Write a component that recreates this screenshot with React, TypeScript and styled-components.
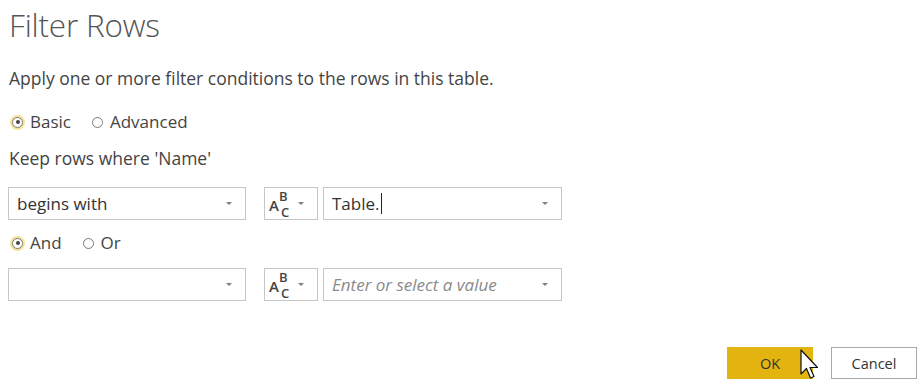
import { createGlobalStyle } from "styled-components"
import styled from "styled-components"

const GlobalStyle = createGlobalStyle`
    body {
        margin: 0;
        background: #ffffff;
        font-family: "Open Sans", "Noto Sans", sans-serif;
        color: #444444;
    }
`

const Dialog = styled.div`
    width: 922px;
    height: 386px;
    box-sizing: border-box;
    padding: 0 5px 0 8px;
    display: flex;
    flex-direction: column;
    position: relative;
`

const Title = styled.h1`
    margin: 3px 0 0 1px;
    font-weight: 300;
    font-size: 31.5px;
    line-height: 44px;
    color: #555555;
    letter-spacing: -0.2px;
`

const Description = styled.p`
    margin: 20px 0 0 1px;
    font-size: 17.5px;
    line-height: 22px;
`

const RadioGroup = styled.div<{ $top: number }>`
    display: flex;
    align-items: center;
    gap: 21px;
    height: 22px;
    margin-left: 4px;
    margin-top: ${(p) => p.$top}px;
`

const RadioOption = styled.label`
    display: flex;
    align-items: center;
    gap: 7px;
    font-size: 17px;
    line-height: 22px;
`

const RadioCircle = styled.span<{ $checked?: boolean }>`
    width: 9px;
    height: 9px;
    border-radius: 50%;
    border: 1px solid #7a7a7a;
    display: flex;
    align-items: center;
    justify-content: center;
    background: #ffffff;
    box-shadow: ${(p) => (p.$checked ? "0 0 0 2px #f6e39a" : "none")};
    &::after {
        content: "";
        width: 4px;
        height: 4px;
        border-radius: 50%;
        background: ${(p) => (p.$checked ? "#444444" : "transparent")};
    }
`

const Label = styled.div`
    margin: 14px 0 0 1px;
    font-size: 17.5px;
    line-height: 22px;
`

const FilterRow = styled.div<{ $top: number }>`
    display: flex;
    align-items: center;
    margin-top: ${(p) => p.$top}px;
    height: 33px;
`

const Select = styled.div<{ $width: number; $gap?: number }>`
    box-sizing: border-box;
    width: ${(p) => p.$width}px;
    height: 33px;
    margin-left: ${(p) => p.$gap ?? 0}px;
    border: 1px solid #c6c6c6;
    display: flex;
    align-items: center;
    padding: 0 13px 0 8px;
    font-size: 17px;
`

const SelectText = styled.span<{ $placeholder?: boolean }>`
    flex: 1;
    color: ${(p) => (p.$placeholder ? "#8a8a8a" : "#333333")};
    font-style: ${(p) => (p.$placeholder ? "italic" : "normal")};
    display: flex;
    align-items: center;
`

const Caret = styled.span`
    display: inline-block;
    width: 1px;
    height: 21px;
    background: #222222;
    margin-left: 1px;
`

const Arrow = styled.span`
    width: 0;
    height: 0;
    border-left: 3px solid transparent;
    border-right: 3px solid transparent;
    border-top: 3px solid #808080;
`

// "ABC" text-type glyph: A with a raised B and a lowered C
const TypeIcon = styled.span`
    position: relative;
    width: 26px;
    height: 24px;
    color: #444444;
    font-weight: 600;
    margin-right: 8px;
    margin-left: -4px;
    span, sup, sub {
        position: absolute;
        font-size: 13px;
        line-height: 13px;
    }
    span { left: 0; bottom: 3px; font-size: 15px; line-height: 15px; }
    sup { left: 10px; top: -2px; }
    sub { left: 12px; bottom: -3px; }
`

const Footer = styled.div`
    margin-top: auto;
    margin-bottom: 7px;
    display: flex;
    justify-content: flex-end;
    gap: 18px;
`

const DialogButton = styled.button<{ $primary?: boolean }>`
    width: 86px;
    height: 32px;
    box-sizing: border-box;
    font-family: inherit;
    font-size: 14.5px;
    color: #333333;
    background: ${(p) => (p.$primary ? "#e3b40f" : "#ffffff")};
    border: 1px solid ${(p) => (p.$primary ? "#e3b40f" : "#a8a8a8")};
    padding: 0;
`

const Pointer = styled.svg`
    position: absolute;
    left: 800px;
    top: 349px;
`

const Radio = ({ label, checked }: { label: string; checked?: boolean }) => (
    <RadioOption>
        <RadioCircle $checked={checked} />
        {label}
    </RadioOption>
)

const AbcIcon = () => (
    <TypeIcon>
        <span>A</span>
        <sup>B</sup>
        <sub>C</sub>
    </TypeIcon>
)

export default function App() {
    return <>
        <GlobalStyle />
        <Dialog>
            <Title>Filter Rows</Title>
            <Description>Apply one or more filter conditions to the rows in this table.</Description>
            <RadioGroup $top={22}>
                <Radio label="Basic" checked />
                <Radio label="Advanced" />
            </RadioGroup>
            <Label>Keep rows where 'Name'</Label>
            <FilterRow $top={18}>
                <Select $width={238}>
                    <SelectText>begins with</SelectText>
                    <Arrow />
                </Select>
                <Select $width={54} $gap={18}>
                    <AbcIcon />
                    <Arrow />
                </Select>
                <Select $width={239} $gap={5}>
                    <SelectText>Table.<Caret /></SelectText>
                    <Arrow />
                </Select>
            </FilterRow>
            <RadioGroup $top={12}>
                <Radio label="And" checked />
                <Radio label="Or" />
            </RadioGroup>
            <FilterRow $top={14}>
                <Select $width={238}>
                    <SelectText />
                    <Arrow />
                </Select>
                <Select $width={54} $gap={18}>
                    <AbcIcon />
                    <Arrow />
                </Select>
                <Select $width={239} $gap={5}>
                    <SelectText $placeholder>Enter or select a value</SelectText>
                    <Arrow />
                </Select>
            </FilterRow>
            <Footer>
                <DialogButton $primary>OK</DialogButton>
                <DialogButton>Cancel</DialogButton>
            </Footer>
            <Pointer width="20" height="34" viewBox="0 0 20 34">
                <path d="M1 1 L1 25 L6.5 19.5 L10.5 29 L14 27.5 L10 18.5 L17.5 18.5 Z" fill="#ffffff" stroke="#111111" strokeWidth="1.2" strokeLinejoin="round" />
            </Pointer>
        </Dialog>
    </>
}
